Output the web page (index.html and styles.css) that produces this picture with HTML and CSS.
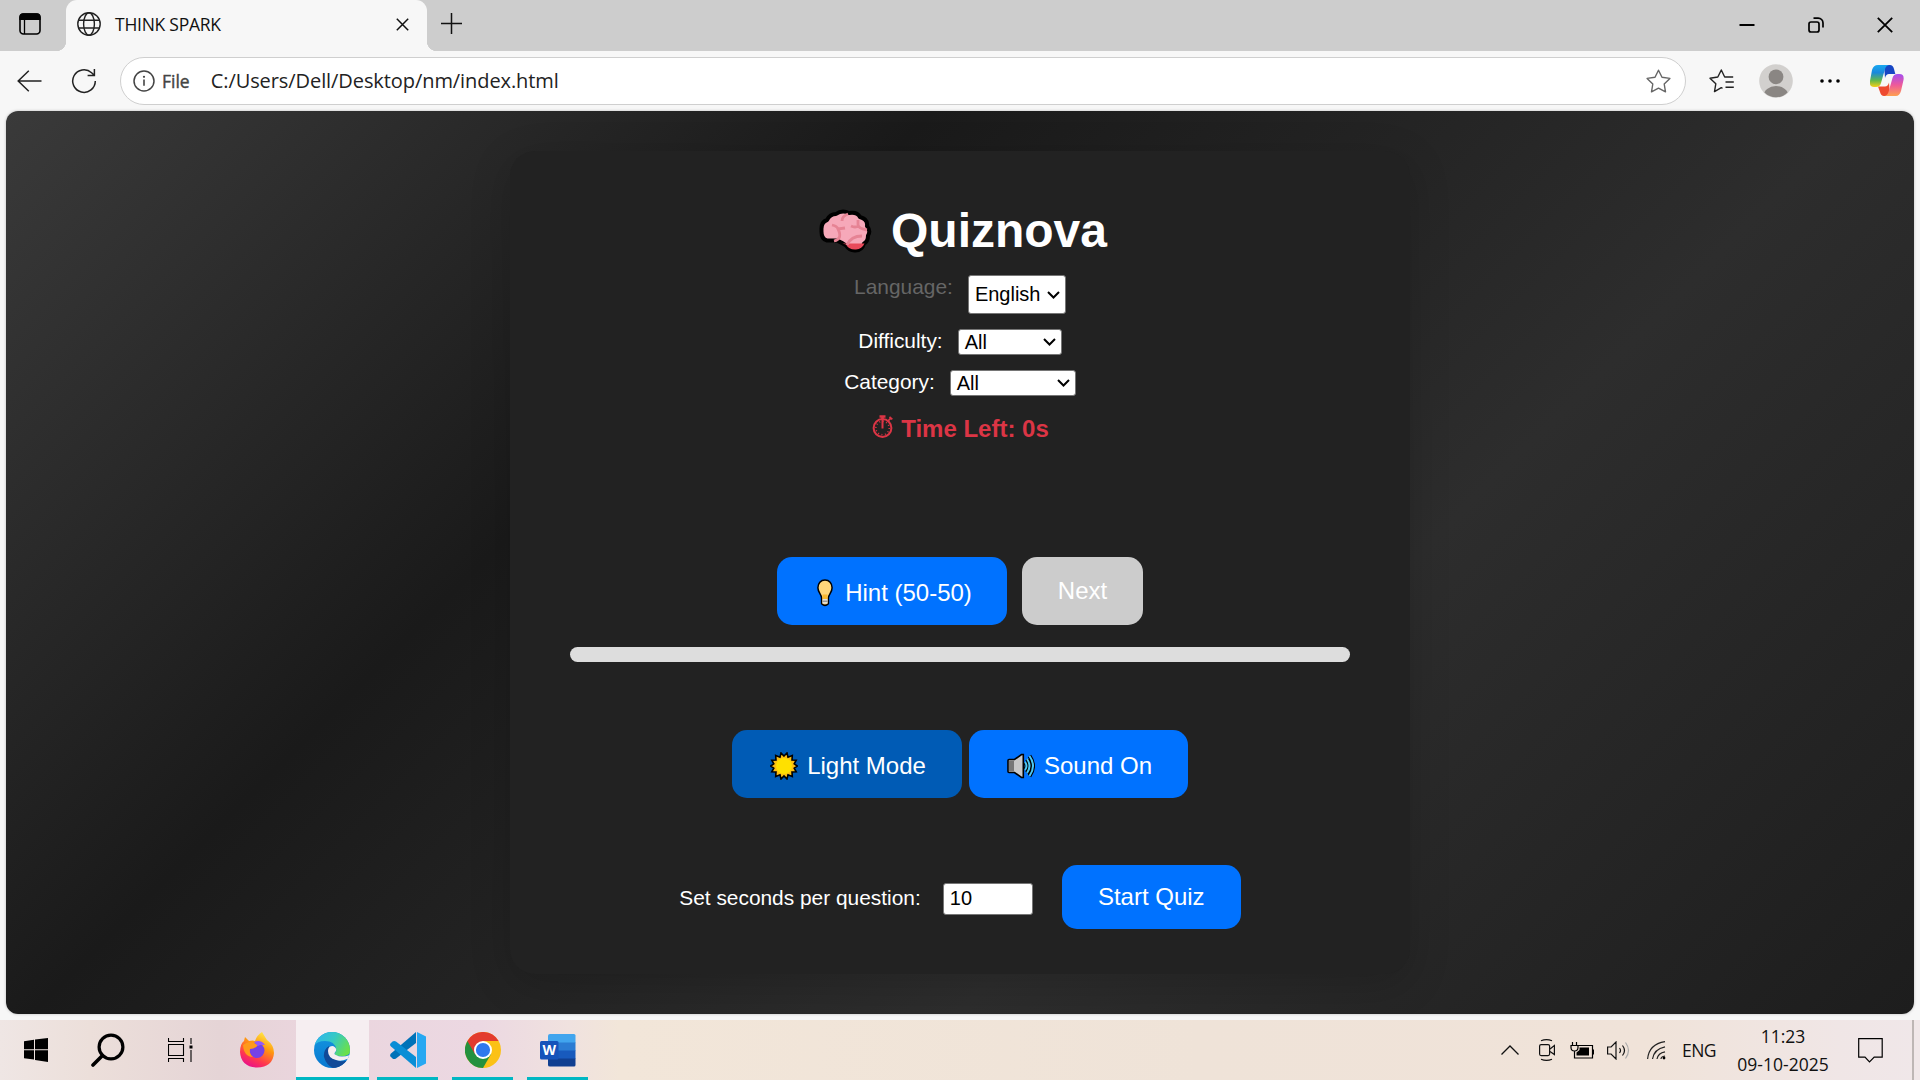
FILE: index.html
```html
<!DOCTYPE html>
<html lang="en">
<head>
<meta charset="utf-8">
<title>THINK SPARK</title>
<link rel="stylesheet" href="styles.css">
</head>
<body>
<div class="screen">
  <header class="tabbar">
    <div class="tab-actions">
      <svg width="22" height="22" viewBox="0 0 22 22"><rect x="1" y="1" width="20" height="20" rx="3.5" fill="none" stroke="#000" stroke-width="1.6"/><path d="M1 6.4V4a3 3 0 0 1 3-3h14a3 3 0 0 1 3 3v2.4zM5.5 6v15" stroke="#000" stroke-width="1.3"/></svg>
    </div>
    <div class="tab">
      <svg class="globe" width="24" height="24" viewBox="0 0 24 24" fill="none" stroke="#222" stroke-width="1.4"><circle cx="12" cy="12" r="11.2"/><ellipse cx="12" cy="12" rx="5.4" ry="11.2"/><path d="M1.8 8.2h20.4M1.8 16h20.4"/></svg>
      <span class="tab-title">THINK SPARK</span>
      <svg class="tab-close" width="13" height="13" viewBox="0 0 13 13"><path d="M.8.8l11.4 11.4M12.2.8L.8 12.2" stroke="#111" stroke-width="1.5"/></svg>
    </div>
    <div class="tab-foot"></div>
    <svg class="new-tab" width="21" height="21" viewBox="0 0 21 21"><path d="M10.5 0v21M0 10.5h21" stroke="#111" stroke-width="1.5"/></svg>
    <div class="window-controls">
      <svg width="16" height="16" viewBox="0 0 16 16"><path d="M.5 8h15" stroke="#000" stroke-width="2"/></svg>
      <svg width="16" height="16" viewBox="0 0 16 16" fill="none" stroke="#000" stroke-width="1.7"><rect x="1" y="5" width="10" height="10" rx="2"/><path d="M5.5 1.1h4.7a4.8 4.8 0 0 1 4.8 4.8v4.6"/></svg>
      <svg width="16" height="16" viewBox="0 0 16 16"><path d="M.8.8l14.4 14.4M15.2.8L.8 15.2" stroke="#000" stroke-width="1.8"/></svg>
    </div>
  </header>

  <nav class="toolbar">
    <svg class="back" width="25" height="22" viewBox="0 0 25 22" fill="none" stroke="#222" stroke-width="1.5"><path d="M11.8.8L1.2 11l10.6 10.2M1.2 11H24.5"/></svg>
    <svg class="reload" width="26" height="26" viewBox="0 0 26 26" fill="none" stroke="#222" stroke-width="1.5"><path d="M24.3 13A11.3 11.3 0 1 1 20.6 4.700L23 7M23.400 1v6.600h-6.800"/></svg>
    <div class="address">
      <svg class="info" width="22" height="22" viewBox="0 0 22 22"><circle cx="11" cy="11" r="10" fill="none" stroke="#444" stroke-width="1.5"/><path d="M11 9.5v6.3" stroke="#444" stroke-width="1.6"/><circle cx="11" cy="6.8" r="1.1" fill="#444"/></svg>
      <span class="scheme">File</span>
      <span class="url">C:/Users/Dell/Desktop/nm/index.html</span>
      <svg class="star" width="25" height="24" viewBox="0 0 25 24"><path d="M12.5 1.2l3.5 7 7.900 1.200-5.700 5.600 1.300 7.800-7-3.700-7 3.700 1.300-7.800L1.100 9.400 9 8.200z" fill="none" stroke="#666" stroke-width="1.4" stroke-linejoin="round"/></svg>
    </div>
    <svg class="favorites" width="25" height="24" viewBox="0 0 25 24" fill="none" stroke="#222" stroke-width="1.4" stroke-linejoin="round"><path d="M13.5 19.3L12.3 18.7 5.500 22.600l1.300-7.800L1 9.200 8.800 8l3.500-7 3.400 7h8.500M16.500 13h8.300M16.500 18.300h8.300"/></svg>
    <svg class="avatar" width="34" height="34" viewBox="0 0 34 34"><clipPath id="face"><circle cx="17" cy="17" r="16.3"/></clipPath><circle cx="17" cy="17" r="16.8" fill="#d2d0ce"/><g fill="#8a8683" clip-path="url(#face)"><circle cx="17" cy="12.8" r="7.4"/><ellipse cx="17" cy="32" rx="12.5" ry="10"/></g></svg>
    <svg class="more" width="20" height="4" viewBox="0 0 20 4"><circle cx="2" cy="2" r="1.8"/><circle cx="10" cy="2" r="1.8"/><circle cx="18" cy="2" r="1.8"/></svg>
    <svg class="copilot" width="34" height="32" viewBox="0 0 34 32">
      <defs>
        <linearGradient id="cpA" x1="0" y1="0" x2="0" y2="1"><stop offset="0" stop-color="#18a8f0"/><stop offset=".35" stop-color="#1988dc"/><stop offset=".7" stop-color="#62b84c"/><stop offset="1" stop-color="#f6d018"/></linearGradient>
        <linearGradient id="cpB" x1="0" y1="0" x2="0" y2="1"><stop offset="0" stop-color="#a44df0"/><stop offset=".5" stop-color="#ee5a9a"/><stop offset="1" stop-color="#ffa050"/></linearGradient>
      </defs>
      <path d="M14 0h6q3 0 4 4l1.300 5H19q-3 0-4 4z" fill="#1746c4"/>
      <path d="M20 31h-6q-3 0-4-4l-2-5.500h7q3 0 4-4z" fill="#ee4a30"/>
      <path d="M8 0h11q-3 .5-4 4l-4 14q-1 4-5 4H4q-5 0-4-6L2 5q1.500-5 6-5z" fill="url(#cpA)"/>
      <path d="M26 31H14.500q3-.5 4-4l4-14q1-4 5-4h2q5 0 4 6l-2.500 11q-1.500 5-5 5z" fill="url(#cpB)"/>
    </svg>
  </nav>

  <main class="page">
    <section class="card">
      <h1 class="title">
        <svg width="54" height="46" viewBox="0 0 54 46">
          <path d="M3.500 22Q3 14 9 12q3-6 9-6 6-4.500 13-1 8-1.500 11 4 8 2 7 9 4 5 1 9.500 0 6-4 8-2 7-8.500 7-6 .5-9.500-5-4-3-7-4-1.500-1-3-1H9Q3 31 3.500 22z" fill="#f6a8b9" stroke="#000" stroke-width="4" stroke-linejoin="round"/>
          <path d="M24.500 35.500H46.500q-2.500 5.500-8.500 6-7 .5-10-5z" fill="#e94a5b"/>
          <path d="M14 17q5 1 6 4l7-1M20 21q5 10-4 12M30 6q-6 2-6 7M40 12v4.500q0 4 9 5.500M41 18q-4 2-8 0M29 37q4-9 15-9" fill="none" stroke="#e68394" stroke-width="2.800"/>
        </svg>
        <span>Quiznova</span>
      </h1>
      <div class="field language"><label>Language:</label><span class="select">English<svg width="13" height="8" viewBox="0 0 13 8"><path d="M1 1l5.500 5.500L12 1" fill="none" stroke="#000" stroke-width="2"/></svg></span></div>
      <div class="field difficulty"><label>Difficulty:</label><span class="select">All<svg width="13" height="8" viewBox="0 0 13 8"><path d="M1 1l5.500 5.500L12 1" fill="none" stroke="#000" stroke-width="2"/></svg></span></div>
      <div class="field category"><label>Category:</label><span class="select">All<svg width="13" height="8" viewBox="0 0 13 8"><path d="M1 1l5.500 5.500L12 1" fill="none" stroke="#000" stroke-width="2"/></svg></span></div>
      <div class="timer">
        <svg width="22" height="23" viewBox="0 0 22 23" fill="none" stroke="#dc3545"><circle cx="10.500" cy="13" r="8.900" stroke-width="2"/><circle cx="10.500" cy="13" r="6.700" stroke-width="1.600" stroke-dasharray="1 2.508"/><path d="M10.500 5v8.500" stroke-width="2"/><path d="M7.500 1.500h6M10.500 1v4" stroke-width="2.600"/><path d="M16 6l3-3.200M17.500 1.800l2.800 2.600" stroke-width="1.800"/></svg>
        <span>Time Left: 0s</span>
      </div>
      <div class="actions">
        <button class="btn hint"><svg width="16" height="28" viewBox="0 0 16 28"><path d="M8 1c4.300 0 7.100 3.300 7.100 7.800 0 4.700-3.400 6.400-3.700 10v6q-3.400 3.200-6.800 0v-6C4.300 15.200.9 13.500.9 8.800.9 4.300 3.700 1 8 1z" fill="#ffd67a" stroke="#000" stroke-width="1.500"/><path d="M5.500 15.500h5V20h-5z" fill="#f8b72e"/><path d="M5.500 20h5v4.500h-5z" fill="#ddd"/><path d="M5.500 22.200h5" stroke="#777"/></svg>Hint (50-50)</button>
        <button class="btn next" disabled>Next</button>
      </div>
      <div class="progress"></div>
      <div class="modes">
        <button class="btn light"><svg width="28" height="28" viewBox="0 0 28 28"><path d="M14 4l3-3 1 4.200L22.300 3.500 22 8l4.200.2-2 3.600L27.300 14l-3.100 2.200 2 3.600L22 20l.3 4.500L18 22.800 17 27l-3-3-3 3-1-4.200-4.300 1.700L6 20l-4.200-.2 2-3.600L.7 14l3.100-2.200-2-3.600L6 8l-.3-4.500L10 5.200 11 1z" fill="#fcbf12" stroke="#000" stroke-width="1.600"/><circle cx="14" cy="14" r="8" fill="#ffe000"/></svg>Light Mode</button>
        <button class="btn sound"><svg width="28" height="26" viewBox="0 0 28 26"><path d="M2 6.500h5.500L14.500 1.500h1.800v23h-1.800l-7-5H2q-1 0-1-1v-11q0-1 1-1z" fill="#c8c8c8" stroke="#000" stroke-width="1.600"/><path d="M2 7.500h5v11H2z" fill="#777"/><g fill="none" stroke="#000" stroke-width="4"><path d="M18 9q3 4 0 8M20 6q5 7 0 14M22.500 3q7 10 0 20"/></g><g fill="none" stroke="#4cc8f4" stroke-width="2"><path d="M18 9q3 4 0 8M20 6q5 7 0 14M22.500 3q7 10 0 20"/></g></svg>Sound On</button>
      </div>
      <div class="setup">
        <label>Set seconds per question:</label>
        <span class="number">10</span>
        <button class="btn start">Start Quiz</button>
      </div>
    </section>
  </main>

  <footer class="taskbar">
    <div class="apps">
      <div class="app"><svg width="24" height="24" viewBox="0 0 24 24"><path d="M0 3.300l10-1.500v9.400H0zM11 1.600L24 0v11.200H11zM0 12.200h10v9.400L0 20.200zM11 12.200h13V24L11 22z"/></svg></div>
      <div class="app"><svg width="34" height="34" viewBox="0 0 34 34" fill="none" stroke="#000"><circle cx="20" cy="14" r="11.900" stroke-width="3.200"/><path d="M11.500 22.500L2 32" stroke-width="3.600" stroke-linecap="round"/></svg></div>
      <div class="app"><svg width="25" height="24" viewBox="0 0 25 24" fill="none" stroke="#000" stroke-width="1.100"><path d="M.5 0v3.500h15V0M.5 6.500h15v11H.5zM.5 24v-3.500h15V24M23 0v6M23 12v12"/><path d="M21.500 7.500h3v3h-3z" fill="#000" stroke="none"/></svg></div>
      <div class="app"><svg width="34" height="36" viewBox="0 0 34 36"><defs><linearGradient id="ffx" x1=".8" y1="0" x2=".3" y2="1"><stop offset="0" stop-color="#fff44f"/><stop offset=".4" stop-color="#ff980e"/><stop offset=".75" stop-color="#ff3750"/><stop offset="1" stop-color="#e8108c"/></linearGradient></defs><path d="M22 0q3 5 5 8 7 5 7 13Q33 35 17 35.500 1 35 0 20q0-8 4-11l1-4 4 4q4-1 6 0 2-6 7-9z" fill="url(#ffx)"/><circle cx="17" cy="18.500" r="7.500" fill="#7542e5"/><path d="M3 13q6-5 11-2l4 2q-3 4-8 4-1 5 3 8-9 0-10-12z" fill="#ff9a1a"/><path d="M14 10q7-3 11 3-4-1-7 1z" fill="#9059ff"/></svg></div>
      <div class="app active"><svg width="36" height="36" viewBox="0 0 36 36"><defs><linearGradient id="edT" x1="0" y1=".2" x2="1" y2=".6"><stop offset="0" stop-color="#2fb4ee"/><stop offset=".5" stop-color="#35c9c4"/><stop offset="1" stop-color="#6be04a"/></linearGradient><linearGradient id="edB" x1="0" y1="0" x2="0" y2="1"><stop offset="0" stop-color="#1596e0"/><stop offset="1" stop-color="#0878d0"/></linearGradient><clipPath id="disc"><circle cx="18" cy="18" r="18"/></clipPath></defs><g clip-path="url(#disc)"><path d="M0 0h36v36H0z" fill="url(#edB)"/><path d="M0 14V0h36v21q-4 4-10 3-6 0-5-3 2-2 1-4-1-8-11-8Q3 9 0 14z" fill="url(#edT)"/><path d="M15 14q-6 4-5 11 3 10 12 12 9-2 13-9-5 2-10 1-11-3-10-15z" fill="#114a98"/><path d="M14 19q0-5 5-5 4 2 3 5-3 3 0 4 5 3 14 0v5l-3-1q-6 3-11 1-8-2-8-9z" fill="#f6eef1"/></g></svg></div>
      <div class="app running"><svg width="36" height="36" viewBox="0 0 36 36"><path d="M26 0v11L6 26.500q-2 1-3.500 0L.5 24.500q-1-1.500.5-3z" fill="#0072b8"/><path d="M26 36V25L6 9.500q-2-1-3.500 0L.5 11.500q-1 1.500.5 3z" fill="#0a8ed6"/><path d="M27 0l9 4.500v27L27 36z" fill="#27a8f2"/></svg></div>
      <div class="app running"><svg width="36" height="36" viewBox="0 0 36 36"><circle cx="18" cy="18" r="18" fill="#fbc116"/><path d="M18 18L2.400 9A18 18 0 0 0 18 36l7.800-13.500z" fill="#24913f"/><path d="M18 9h15.600A18 18 0 0 0 2.400 9l7.800 13.500z" fill="#e33b2e"/><circle cx="18" cy="18" r="9" fill="#fff"/><circle cx="18" cy="18" r="7.100" fill="#2f78ee"/></svg></div>
      <div class="app running"><svg class="word" width="36" height="33" viewBox="0 0 36 33"><path d="M8 9V2q0-2 2-2h24q1.500 0 1.500 1.500V9z" fill="#41a5ee"/><path d="M8 8.500h27.500V17H8z" fill="#2b7cd3"/><path d="M8 16.500h27.500V25H8z" fill="#185abd"/><path d="M8 24.500h27.500V31q0 1.500-1.500 1.500H10Q8 32.500 8 31z" fill="#103f91"/><rect y="7" width="18.500" height="18.500" rx="1.500" fill="#1553ba"/><text class="word-letter" x="9.200" y="21" text-anchor="middle">W</text></svg></div>
    </div>
    <div class="tray">
      <div class="tray-item chevron"><svg width="18" height="10" viewBox="0 0 18 10"><path d="M.5 9.500L9 1l8.500 8.500" fill="none" stroke="#111" stroke-width="1.300"/></svg></div>
      <div class="tray-item camera"><svg width="16" height="22" viewBox="0 0 16 22" fill="none" stroke="#111" stroke-width="1.200"><rect x=".6" y="5.600" width="10" height="11" rx="1.500"/><path d="M11 10l4.400-3.500v9L11 12.500M2 1.800q5.500-2.300 11 0M2 20.200q5.500 2.300 11 0"/></svg></div>
      <div class="tray-item battery"><svg width="24" height="17" viewBox="0 0 24 17" fill="none" stroke="#000" stroke-width="1.200"><path d="M8 3.500h14.500V16h-18v-4M22.500 8h1.200v4h-1.200M2.500 0v3.500M6.500 0v3.500M1 3.500h7v2q0 3.500-3.500 3.500T1 5.500zM4.500 9v4"/><path d="M9.500 5.500h9.500v8H6.500v-3l3-2.500z" fill="#000" stroke="none"/></svg></div>
      <div class="tray-item volume"><svg width="23" height="19" viewBox="0 0 23 19" fill="none" stroke="#111" stroke-width="1.200"><path d="M.6 6v7h3.500L9 18V1L4.100 6zM12.500 7q2 2.500 0 5M15.500 4.500q4 5 0 10"/><path d="M18.500 1.500q6 8 0 16" stroke="#aaa"/></svg></div>
      <div class="tray-item wifi"><svg width="19" height="19" viewBox="0 0 19 19" fill="none" stroke="#222" stroke-width="1.200"><path d="M.6 18Q2 3 18 .6M5.500 18Q7 8 18 5.800M10 18q1-6 8-7.200M14 18q0-2.500 4-3"/><circle cx="17" cy="17" r="1.400" fill="#000" stroke="none"/></svg></div>
      <div class="tray-item lang"><span>ENG</span></div>
      <div class="tray-item clock"><span>11:23</span><span>09-10-2025</span></div>
      <div class="tray-item notify"><svg width="25" height="25" viewBox="0 0 25 25"><path d="M.7.700h23.500v18.500h-8L11.500 24 7 19.200H.7z" fill="none" stroke="#000" stroke-width="1.200"/></svg></div>
      <div class="show-desktop"></div>
    </div>
  </footer>
</div>
</body>
</html>
```
FILE: styles.css
```css
* { box-sizing: border-box; }
body { margin: 0; overflow: hidden; }
svg { display: block; flex: none; }

.screen {
  width: 1920px;
  height: 1080px;
  display: flex;
  flex-direction: column;
  background: #f7f7f7;
  font-family: "Open Sans", "Noto Sans", sans-serif;
}

/* Tab strip */
.tabbar {
  height: 51px;
  display: flex;
  align-items: center;
  background: #cdcdcd;
}
.tab-actions {
  width: 66px;
  height: 51px;
  padding: 13px 0 0 19px;
  background: radial-gradient(circle at 0 0, #cdcdcd 10px, #f7f7f7 10.5px) right bottom / 10px 10px no-repeat;
}
.tab {
  width: 361px;
  height: 51px;
  display: flex;
  align-items: center;
  padding: 0 18px 4px 11px;
  border-radius: 11px 11px 0 0;
  background: #f7f7f7;
}
.tab-foot {
  width: 10px;
  height: 10px;
  align-self: flex-end;
  background: radial-gradient(circle at 100% 0, #cdcdcd 10px, #f7f7f7 10.5px);
}
.tab-title {
  margin-left: 14px;
  font-size: 17.5px;
  letter-spacing: -0.25px;
  color: #111;
  white-space: nowrap;
}
.tab-close { margin: 2px 0 0 auto; }
.new-tab { margin: -4px 0 0 4px; }
.window-controls {
  margin-left: auto;
  padding: 0 27px 1px 0;
  display: flex;
  gap: 53px;
}

/* Navigation bar */
.toolbar {
  height: 60px;
  display: flex;
  align-items: center;
}
.back { margin-left: 17px; }
.reload { margin-left: 29px; }
.address {
  width: 1566px;
  height: 48px;
  margin-left: 23px;
  padding: 0 14px 0 12px;
  display: flex;
  align-items: center;
  border: 1.5px solid #cfcfcf;
  border-radius: 24px;
  background: #fff;
}
.scheme { margin-left: 7px; padding-bottom: 1px; font-size: 17.5px; color: #444; -webkit-text-stroke: 0.4px #444; }
.url { margin-left: 21px; padding-bottom: 1px; font-size: 20px; letter-spacing: -0.08px; color: #222; white-space: nowrap; }
.star { margin-left: auto; }
.favorites { margin-left: 23px; }
.avatar { margin-left: 25px; }
.more { margin-left: 27px; }
.copilot { margin-left: 30px; }

/* Browser viewport */
.page {
  height: 903px;
  margin: 0 6px;
  padding-top: 40px;
  overflow: hidden;
  border-radius: 12px;
  background: linear-gradient(135deg, #3a3a3a, #1a1a1a 33%, #2d2d2d 66%, #1d1d1d);
  box-shadow: 0 0 3px rgba(0, 0, 0, 0.25);
  font-family: "Liberation Sans", Arial, sans-serif;
}
.card {
  width: 900px;
  height: 823px;
  margin: 0 auto;
  padding: 50px 60px 0;
  display: flex;
  flex-direction: column;
  align-items: center;
  border-radius: 25px;
  background: #222;
  box-shadow: 0 10px 40px rgba(0, 0, 0, 0.17);
  color: #fff;
  font-size: 20.9px;
}
.title {
  height: 58px;
  margin: 0;
  padding: 2px 0 0 5px;
  display: flex;
  align-items: center;
  gap: 19px;
  font-size: 48px;
  line-height: 58px;
}
.field { display: flex; gap: 15px; }
.field label { line-height: 24px; }
.select {
  display: flex;
  align-items: center;
  justify-content: space-between;
  padding: 0 5px 0 6px;
  border: 1px solid #767676;
  border-radius: 3px;
  background: #fff;
  color: #000;
  font-size: 20px;
}
.language { height: 39px; margin-top: 16px; }
.language label { color: #666; }
.language .select { width: 98px; }
.difficulty { height: 26px; margin-top: 15px; }
.difficulty .select { width: 104px; }
.category { height: 26px; margin-top: 15px; }
.category .select { width: 126px; }
.timer {
  height: 28px;
  margin-top: 19px;
  display: flex;
  gap: 7px;
  padding-left: 1px;
  color: #dc3545;
  font-size: 24px;
  font-weight: bold;
  line-height: 28px;
}
.btn {
  display: flex;
  align-items: center;
  justify-content: center;
  padding: 0;
  border: 0;
  border-radius: 15px;
  background: #0072ff;
  color: #fff;
  font: 24px "Liberation Sans", Arial, sans-serif;
  white-space: nowrap;
}
.actions { display: flex; gap: 15px; margin-top: 114px; height: 68px; }
.hint { width: 230px; gap: 11px; padding: 3px 0 0 4px; }
.hint svg { width: 18px; }
.next { width: 121px; background: #ccc; }
.progress { width: 780px; height: 15px; margin-top: 22px; border-radius: 8px; background: #ddd; }
.modes { display: flex; gap: 7px; margin-top: 68px; height: 68px; }
.light { width: 230px; gap: 9px; padding: 3px 0 0 2px; background: #005bb5; }
.sound { width: 219px; gap: 9px; padding: 3px 0 0 2px; }
.setup { display: flex; align-items: center; height: 64px; margin-top: 67px; }
.setup label { padding-top: 2px; }
.number {
  width: 90px;
  height: 32px;
  margin: 3px 29px 0 22px;
  padding-left: 6px;
  border: 1px solid #767676;
  border-radius: 3px;
  background: #fff;
  color: #000;
  font-size: 20px;
  line-height: 29px;
}
.start { width: 179px; height: 64px; }

/* Taskbar */
.taskbar {
  height: 60px;
  margin-top: 6px;
  display: flex;
  justify-content: space-between;
  background: linear-gradient(90deg, #efe6e4, #ecdfda 90px, #e5d4d6 220px, #ead5dd 300px, #ecd8e2 480px, #f0e2df 570px, #f2e6d9 620px, #efe3d8 1200px, #f0e3d9 1650px, #f0e6e6 1840px, #f0e7e9);
}
.apps { display: grid; grid-template-columns: 72px 71px 74px 79px 73px 75px 75px 75px; }
.app { display: flex; align-items: center; justify-content: center; }
.active { background: #f6eef1; border-bottom: 3px solid #00b7c3; padding: 3px 2px 0 0; }
.running { margin: 0 6px 0 8px; border-bottom: 3px solid #00b7c3; padding-top: 3px; }
.word-letter { font: bold 14px "Open Sans", sans-serif; fill: #fff; }
.tray { display: grid; grid-template-columns: 36px 38px 32px 40px 36px 50px 118px 56px 22px; }
.tray-item { display: flex; align-items: center; justify-content: center; color: #111; font-size: 17.5px; }
.clock { flex-direction: column; font-size: 17.5px; line-height: 28px; }
.lang { letter-spacing: -0.5px; }
.show-desktop { margin-left: 14px; border-left: 2px solid #bdb6b5; }
```
